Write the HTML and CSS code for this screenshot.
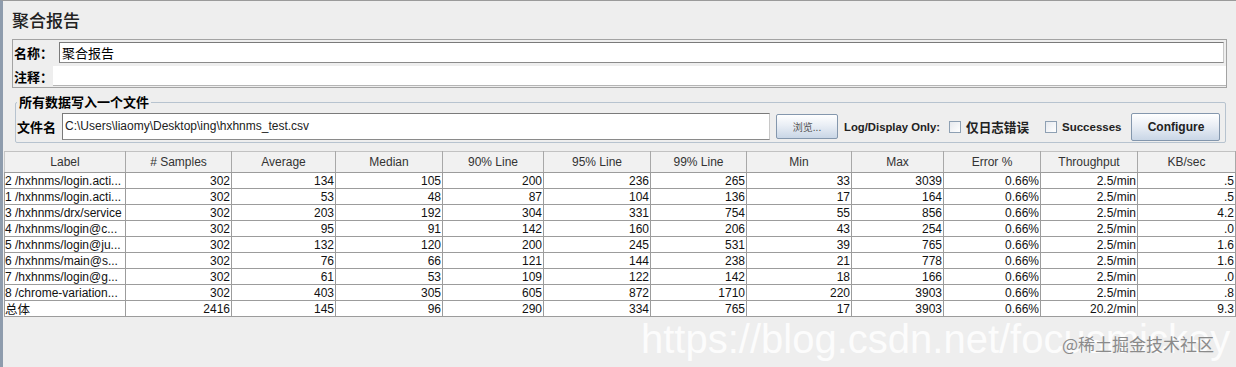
FILE: index.html
```html
<!DOCTYPE html>
<html lang="zh-CN">
<head>
  <meta charset="UTF-8">
  <title>聚合报告</title>
  <link rel="stylesheet" href="styles.css">
</head>
<body>
  <div class="panel">
    <h1 class="title">聚合报告</h1>
    <div class="name-box">
      <div class="name-row">
        <span class="label">名称：</span>
        <div class="field name-field">聚合报告</div>
      </div>
      <div class="name-row">
        <span class="label">注释：</span>
        <div class="comment-field"></div>
      </div>
    </div>
    <fieldset class="file-box">
      <legend>所有数据写入一个文件</legend>
      <div class="file-row">
        <span class="label">文件名</span>
        <div class="field file-field">C:\Users\liaomy\Desktop\ing\hxhnms_test.csv</div>
        <button class="btn browse">浏览...</button>
        <span class="log-label">Log/Display Only:</span>
        <span class="check"></span>
        <span class="check-text cjk">仅日志错误</span>
        <span class="check"></span>
        <span class="check-text">Successes</span>
        <button class="btn configure">Configure</button>
      </div>
    </fieldset>
    <table class="report">
      <thead>
        <tr>
          <th class="c-label">Label</th>
          <th class="c-samples"># Samples</th>
          <th class="c-avg">Average</th>
          <th class="c-median">Median</th>
          <th class="c-90">90% Line</th>
          <th class="c-95">95% Line</th>
          <th class="c-99">99% Line</th>
          <th class="c-min">Min</th>
          <th class="c-max">Max</th>
          <th class="c-err">Error %</th>
          <th class="c-tp">Throughput</th>
          <th class="c-kb">KB/sec</th>
        </tr>
      </thead>
      <tbody>
        <tr><td>2 /hxhnms/login.acti...</td><td>302</td><td>134</td><td>105</td><td>200</td><td>236</td><td>265</td><td>33</td><td>3039</td><td>0.66%</td><td>2.5/min</td><td>.5</td></tr>
        <tr><td>1 /hxhnms/login.acti...</td><td>302</td><td>53</td><td>48</td><td>87</td><td>104</td><td>136</td><td>17</td><td>164</td><td>0.66%</td><td>2.5/min</td><td>.5</td></tr>
        <tr><td>3 /hxhnms/drx/service</td><td>302</td><td>203</td><td>192</td><td>304</td><td>331</td><td>754</td><td>55</td><td>856</td><td>0.66%</td><td>2.5/min</td><td>4.2</td></tr>
        <tr><td>4 /hxhnms/login@c...</td><td>302</td><td>95</td><td>91</td><td>142</td><td>160</td><td>206</td><td>43</td><td>254</td><td>0.66%</td><td>2.5/min</td><td>.0</td></tr>
        <tr><td>5 /hxhnms/login@ju...</td><td>302</td><td>132</td><td>120</td><td>200</td><td>245</td><td>531</td><td>39</td><td>765</td><td>0.66%</td><td>2.5/min</td><td>1.6</td></tr>
        <tr><td>6 /hxhnms/main@s...</td><td>302</td><td>76</td><td>66</td><td>121</td><td>144</td><td>238</td><td>21</td><td>778</td><td>0.66%</td><td>2.5/min</td><td>1.6</td></tr>
        <tr><td>7 /hxhnms/login@g...</td><td>302</td><td>61</td><td>53</td><td>109</td><td>122</td><td>142</td><td>18</td><td>166</td><td>0.66%</td><td>2.5/min</td><td>.0</td></tr>
        <tr><td>8 /chrome-variation...</td><td>302</td><td>403</td><td>305</td><td>605</td><td>872</td><td>1710</td><td>220</td><td>3903</td><td>0.66%</td><td>2.5/min</td><td>.8</td></tr>
        <tr><td class="cjk">总体</td><td>2416</td><td>145</td><td>96</td><td>290</td><td>334</td><td>765</td><td>17</td><td>3903</td><td>0.66%</td><td>20.2/min</td><td>9.3</td></tr>
      </tbody>
    </table>
    <div class="watermark">https://blog.csdn.net/focusmickey</div>
    <div class="stamp">@稀土掘金技术社区</div>
  </div>
</body>
</html>
```

FILE: styles.css
```css
*{
  margin: 0;
  padding: 0;
  box-sizing: border-box;
}
body{
  background: #eeeeee;
  font-family: "Liberation Sans", Arial, "Noto Sans CJK SC", sans-serif;
  font-size: 12px;
  color: #000;
  overflow: hidden;
}
.panel{
  position: relative;
  height: 367px;
  border-top: 1px solid #9a9a9a;
  border-left: 3px solid #8e9cad;
  background: #eeeeee;
}
.title{
  margin: 9px 0 0 9px;
  height: 20px;
  line-height: 20px;
  font-family: "Noto Sans CJK SC", sans-serif;
  font-size: 17px;
  font-weight: 500;
  color: #222;
}
.label{
  font-family: "Noto Sans CJK SC", sans-serif;
  font-size: 13px;
  font-weight: 700;
  white-space: nowrap;
}

/* 名称 / 注释 */
.name-box{
  margin: 9px 9px 0 9px;
  height: 49px;
  border: 1px solid #a3a3a3;
  padding: 1px 0 0 1px;
}
.name-row{
  display: flex;
  align-items: center;
}
.name-row:first-child{
  height: 22px;
  margin-bottom: 3px;
}
.name-row:first-child .label{
  width: 45px;
}
.name-row:last-child .label{
  width: 39px;
}
.field{
  height: 21px;
  line-height: 19px;
  background: #fff;
  border: 1px solid #7a7a7a;
  border-right-color: #c8c8c8;
  border-bottom-color: #8a8a8a;
  padding-left: 2px;
  white-space: nowrap;
}
.name-field{
  flex: 1;
  margin-right: 2px;
  font-family: "Noto Sans CJK SC", sans-serif;
  font-size: 13px;
}
.comment-field{
  flex: 1;
  height: 20px;
  background: #fff;
  border-bottom: 1px solid #b5b5b5;
}

/* 文件 */
.file-box{
  margin: 6px 10px 0 12px;
  border: 1px solid #b7c3cf;
  border-radius: 2px;
  padding: 2px 3px 1px 1px;
}
.file-box legend{
  margin-left: 0;
  padding: 0 2px 0 2px;
  height: 16px;
  line-height: 16px;
  font-family: "Noto Sans CJK SC", sans-serif;
  font-size: 13px;
  font-weight: 700;
}
.file-row{
  display: flex;
  align-items: center;
  height: 29px;
}
.file-row .label{
  width: 45px;
}
.file-field{
  width: 708px;
  height: 27px;
  line-height: 25px;
  font-size: 12px;
  color: #222;
}
.btn{
  flex: none;
  font-family: "Liberation Sans", Arial, sans-serif;
  background: linear-gradient(#ffffff, #e9eef5 45%, #c9d6e6);
  border: 1px solid #8497ad;
  border-radius: 2px;
  color: #222;
}
.browse{
  width: 62px;
  height: 25px;
  margin-left: 6px;
  font-family: "Noto Sans CJK SC", sans-serif;
  font-size: 10px;
  color: #555;
}
.log-label{
  margin-left: 6px;
  font-weight: 700;
  font-size: 11.3px;
  color: #222;
  white-space: nowrap;
}
.check{
  flex: none;
  width: 12px;
  height: 12px;
  margin-left: 9px;
  border: 1px solid #8ea0b3;
  background: linear-gradient(135deg, #e6e9ee, #ffffff);
}
.check-text{
  margin-left: 5px;
  font-weight: 700;
  font-size: 11.5px;
  color: #222;
  white-space: nowrap;
}
.check-text.cjk{
  font-family: "Noto Sans CJK SC", sans-serif;
  font-size: 12.6px;
  margin-right: 7px;
}
.configure{
  width: 89px;
  height: 28px;
  margin-left: 10px;
  font-weight: 700;
  font-size: 12px;
}

/* 表格 */
.report{
  margin: 8px 0 0 1px;
  width: 1231px;
  border-collapse: collapse;
  table-layout: fixed;
  background: #fff;
}
.report th,.report td{
  border: 1px solid #9c9c9c;
  padding: 0 1px 0 1px;
  font-weight: 400;
  font-size: 12px;
  white-space: nowrap;
  overflow: hidden;
}
.report th{
  height: 21px;
  background: #f1f1f1;
  color: #333;
  text-align: center;
  border-color: #c2c2c2 #a8a8a8 #9c9c9c #c8c8c8;
}
.report td{
  height: 16px;
  line-height: 14px;
  text-align: right;
  color: #111;
}
.report td:first-child{
  text-align: left;
  padding-left: 0;
}
.report td.cjk{
  font-family: "Noto Sans CJK SC", sans-serif;
  font-size: 12.5px;
  line-height: 14px;
  overflow: visible;
}
.c-label{ width: 121px; }
.c-samples{ width: 106px; }
.c-avg{ width: 104px; }
.c-median{ width: 107px; }
.c-90{ width: 101px; }
.c-95{ width: 107px; }
.c-99{ width: 96px; }
.c-min{ width: 105px; }
.c-max{ width: 92px; }
.c-err{ width: 97px; }
.c-tp{ width: 97px; }
.c-kb{ width: 98px; }

/* 水印 */
.watermark{
  position: absolute;
  left: 638px;
  top: 318px;
  font-size: 40px;
  line-height: 40px;
  color: rgba(255, 255, 255, 0.85);
  white-space: nowrap;
}
.stamp{
  position: absolute;
  left: 1059px;
  top: 332px;
  font-family: "Noto Sans CJK SC", sans-serif;
  font-size: 17px;
  line-height: 22px;
  color: #8a8a8a;
  white-space: nowrap;
}
```
